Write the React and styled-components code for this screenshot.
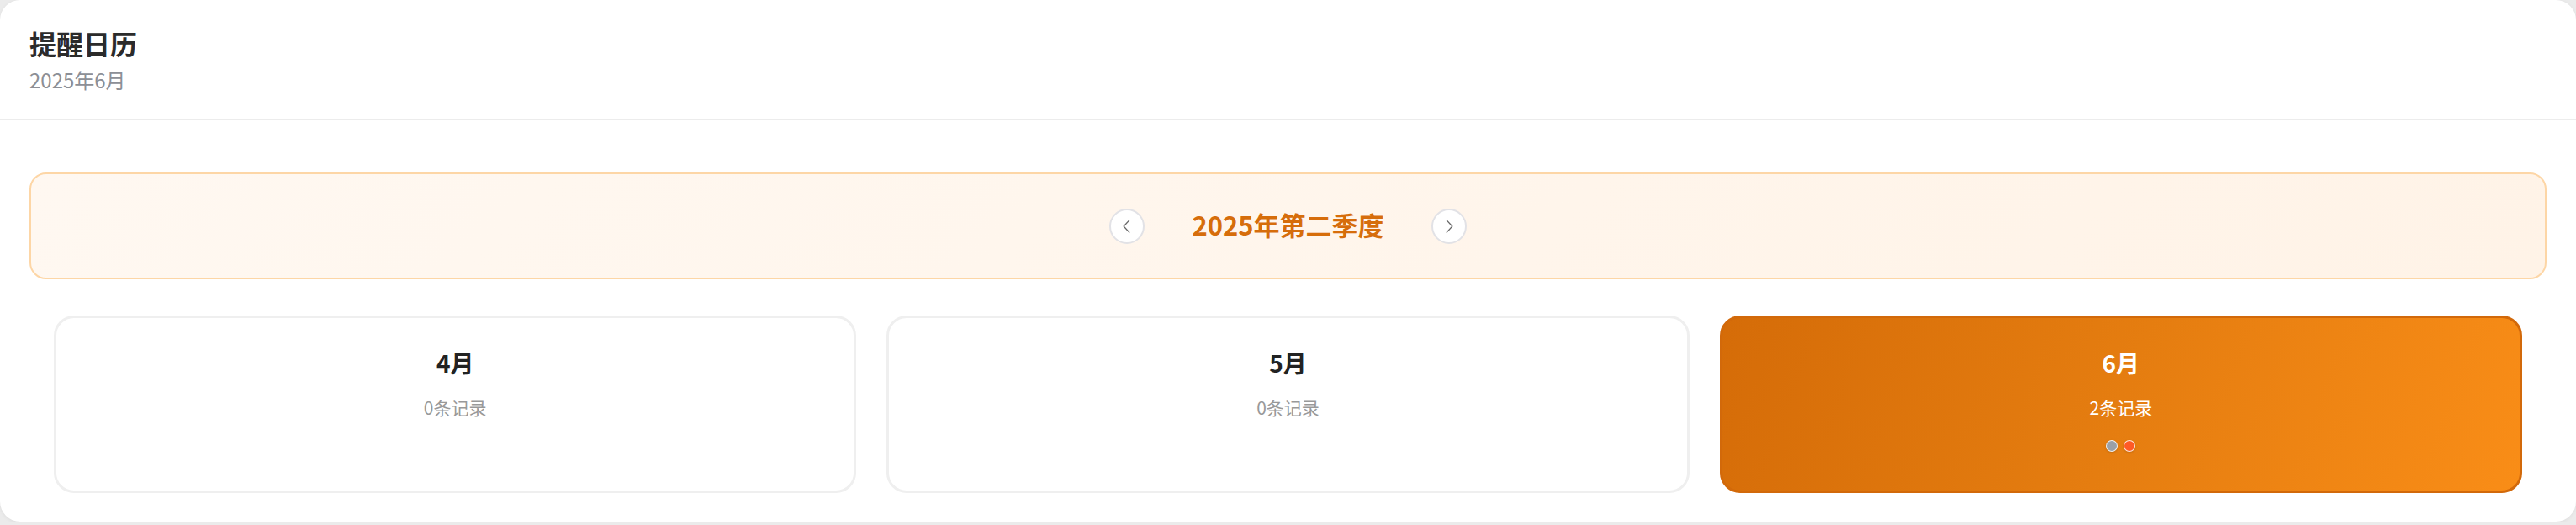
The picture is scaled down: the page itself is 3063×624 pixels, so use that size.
import React from 'react';
import styled, { createGlobalStyle } from 'styled-components';

const GlobalStyle = createGlobalStyle`
body {
    margin: 0;
    background: #ebebeb;
    font-family: "Noto Sans CJK SC", "Noto Sans", sans-serif;
}
`;

const Panel = styled.div`
background: #fff;
border-radius: 24px;
height: 620px;
box-sizing: border-box;
box-shadow: 0 1px 4px rgba(0, 0, 0, 0.06);
overflow: hidden;
`;

const Header = styled.div`
padding: 31px 35px 30px;
border-bottom: 2px solid #ececec;
`;

const Title = styled.div`
font-size: 32px;
line-height: 40px;
font-weight: 700;
color: #2b2b2b;
`;

const SubTitle = styled.div`
margin-top: 8px;
font-size: 24px;
line-height: 32px;
color: #8c8f96;
`;

const Body = styled.div`
padding: 62px 35px 0;
`;

const QuarterBar = styled.div`
height: 127px;
box-sizing: border-box;
border: 2px solid #fdd6a6;
border-radius: 20px;
background: linear-gradient(135deg, #fff8f1 0%, #fff3e7 100%);
display: flex;
align-items: center;
justify-content: center;
gap: 56px;
`;

const NavButton = styled.button`
width: 42px;
height: 42px;
border-radius: 50%;
border: 2px solid #e2e2e6;
background: #fff;
display: flex;
align-items: center;
justify-content: center;
padding: 0;
cursor: pointer;
svg {
    width: 22px;
    height: 22px;
}
`;

const QuarterTitle = styled.div`
font-size: 31px;
line-height: 40px;
font-weight: 700;
color: #d66d0b;
margin-bottom: 4px;
`;

const MonthGrid = styled.div`
margin-top: 43px;
padding: 0 29px;
display: grid;
grid-template-columns: repeat(3, 1fr);
gap: 36px;
`;

const MonthCard = styled.div`
height: 211px;
box-sizing: border-box;
border-radius: 24px;
border: 3px solid ${p => p.$active ? '#d2690a' : '#efefef'};
background: ${p => p.$active ? 'linear-gradient(110deg, #d56c08 0%, #e57d10 50%, #f98d17 100%)' : '#fff'};
padding-top: 35px;
display: flex;
flex-direction: column;
align-items: center;
cursor: pointer;
`;

const MonthName = styled.div`
font-size: 28px;
line-height: 36px;
font-weight: 700;
color: ${p => p.$active ? '#fff' : '#222'};
`;

const Count = styled.div`
margin-top: 21px;
font-size: 21px;
line-height: 28px;
color: ${p => p.$active ? '#fff' : '#999'};
`;

const Dots = styled.div`
margin-top: 25px;
display: flex;
gap: 7px;
`;

const Dot = styled.span`
width: 14px;
height: 14px;
box-sizing: border-box;
border-radius: 50%;
border: 1.5px solid rgba(255, 255, 255, 0.85);
background: ${p => p.$color};
box-shadow: 0 1px 3px rgba(0, 0, 0, 0.15);
`;

const Chevron = ({dir}) => (
    <svg viewBox='0 0 20 20' fill='none' stroke='#666' strokeWidth='1.2' strokeLinecap='round' strokeLinejoin='round'>
        {dir === 'left'
            ? <path d='M12.5 3.5 L6.5 10 L12.5 16.5' />
            : <path d='M7.5 3.5 L13.5 10 L7.5 16.5' />}
    </svg>
);

const months = [
    {name: '4月', count: 0, dots: []},
    {name: '5月', count: 0, dots: []},
    {name: '6月', count: 2, dots: ['#9aa0a8', '#ff5a26'], active: true},
];

export default function App() {
    return (
        <>
            <GlobalStyle />
            <Panel>
                <Header>
                    <Title>提醒日历</Title>
                    <SubTitle>2025年6月</SubTitle>
                </Header>
                <Body>
                    <QuarterBar>
                        <NavButton><Chevron dir='left' /></NavButton>
                        <QuarterTitle>2025年第二季度</QuarterTitle>
                        <NavButton><Chevron dir='right' /></NavButton>
                    </QuarterBar>
                    <MonthGrid>
                        {months.map(m => (
                            <MonthCard key={m.name} $active={m.active}>
                                <MonthName $active={m.active}>{m.name}</MonthName>
                                <Count $active={m.active}>{m.count}条记录</Count>
                                {m.dots.length > 0 && (
                                    <Dots>
                                        {m.dots.map((c, i) => <Dot key={i} $color={c} />)}
                                    </Dots>
                                )}
                            </MonthCard>
                        ))}
                    </MonthGrid>
                </Body>
            </Panel>
        </>
    );
}
